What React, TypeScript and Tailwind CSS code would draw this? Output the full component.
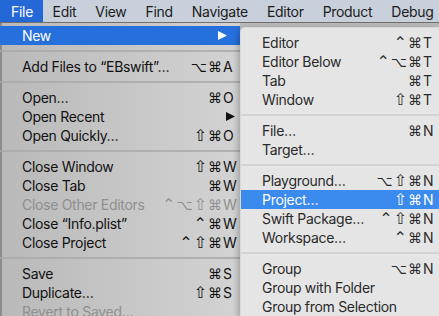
type Item =
  | 'sep'
  | { label: string; mods?: string; k?: string; disabled?: boolean; arrow?: string; active?: boolean }

const MENUBAR = ['Edit', 'View', 'Find', 'Navigate', 'Editor', 'Product', 'Debug']

const FILE_MENU: Item[] = [
  { label: 'New', active: true, arrow: 'mr-[9px]' },
  'sep',
  { label: 'Add Files to “EBswift”…', mods: '⌥⌘', k: 'A' },
  'sep',
  { label: 'Open…', mods: '⌘', k: 'O' },
  { label: 'Open Recent', arrow: 'mr-[1px]' },
  { label: 'Open Quickly…', mods: '⇧⌘', k: 'O' },
  'sep',
  { label: 'Close Window', mods: '⇧⌘', k: 'W' },
  { label: 'Close Tab', mods: '⌘', k: 'W' },
  { label: 'Close Other Editors', mods: '⌃⌥⇧⌘', k: 'W', disabled: true },
  { label: 'Close “Info.plist”', mods: '⌃⌘', k: 'W' },
  { label: 'Close Project', mods: '⌃⇧⌘', k: 'W' },
  'sep',
  { label: 'Save', mods: '⌘', k: 'S' },
  { label: 'Duplicate…', mods: '⇧⌘', k: 'S' },
  { label: 'Revert to Saved…', disabled: true },
]

const NEW_MENU: Item[] = [
  { label: 'Editor', mods: '⌃⌘', k: 'T' },
  { label: 'Editor Below', mods: '⌃⌥⌘', k: 'T' },
  { label: 'Tab', mods: '⌘', k: 'T' },
  { label: 'Window', mods: '⇧⌘', k: 'T' },
  'sep',
  { label: 'File…', mods: '⌘', k: 'N' },
  { label: 'Target…' },
  'sep',
  { label: 'Playground…', mods: '⌥⇧⌘', k: 'N' },
  { label: 'Project…', mods: '⇧⌘', k: 'N', active: true },
  { label: 'Swift Package…', mods: '⌃⇧⌘', k: 'N' },
  { label: 'Workspace…', mods: '⌃⌘', k: 'N' },
  'sep',
  { label: 'Group', mods: '⌥⌘', k: 'N' },
  { label: 'Group with Folder' },
  { label: 'Group from Selection' },
]

// modifier glyphs in DejaVu come out at uneven sizes, so size each one
const MOD_SIZE: Record<string, string> = {
  '⌘': 'text-[14px]',
  '⌥': 'text-[14px]',
  '⇧': 'text-[16px]',
  '⌃': 'text-[16px]',
}

function Arrow({ className }: { className: string }) {
  return (
    <svg width="9" height="9" viewBox="0 0 9 9" className={`ml-auto ${className}`}>
      <polygon points="0,0 9,4.5 0,9" fill="currentColor" />
    </svg>
  )
}

function Mods({ mods }: { mods: string }) {
  return (
    <span className="flex items-center gap-[1px] font-['DejaVu_Sans',sans-serif] tracking-normal leading-none">
      {[...mods].map((m, i) => (
        <span key={i} className={MOD_SIZE[m]}>{m}</span>
      ))}
    </span>
  )
}

function MenuList({ items, sub }: { items: Item[]; sub?: boolean }) {
  return (
    <>
      {items.map((it, i) => {
        if (it === 'sep') {
          return (
            <div key={i} className="h-[12px] flex items-center">
              <div className={sub ? 'h-[2px] w-full bg-[#d3d3d3]' : 'h-[2px] w-full bg-[#a9a9a9]/80'} />
            </div>
          )
        }
        const color = it.active
          ? 'text-white'
          : it.disabled
            ? 'text-[#8f8f8f]'
            : sub
              ? 'text-[#2a2a2a]'
              : 'text-[#111111]'
        const bg = it.active ? (sub ? 'bg-[#3b8aee]' : 'bg-[#2670de]') : ''
        return (
          <div
            key={i}
            className={`h-[19px] flex items-center ${sub ? 'pl-[21px] pr-[3px]' : 'pl-[22px] pr-[4px]'} ${color} ${bg}`}
          >
            <span className="whitespace-nowrap">{it.label}</span>
            {it.arrow && <Arrow className={it.arrow} />}
            {it.k && (
              <span className="ml-auto flex items-center">
                {it.mods && <Mods mods={it.mods} />}
                <span className="w-[14px] pl-[1px]">{it.k}</span>
              </span>
            )}
          </div>
        )
      })}
    </>
  )
}

export default function App() {
  return (
    <div className="relative w-[439px] h-[316px] overflow-hidden bg-[#b9b9b9] font-['Inter',sans-serif] text-[14px] tracking-[-0.3px] select-none">
      {/* menu bar */}
      <div className="h-[22px] flex items-center bg-[#c8d1db] text-[#1b1b1b]">
        <div className="h-full flex items-center pl-[11px] pr-[10px] bg-[#2468d8] text-white">File</div>
        {MENUBAR.map(m => (
          <div key={m} className="h-full flex items-center px-[9.5px]">{m}</div>
        ))}
      </div>
      <div className="h-px bg-[#6e6e6e]" />

      {/* File menu */}
      <div className="w-[240px] h-[293px] pt-[3px] border-l-2 border-[#8c8c8c] bg-gradient-to-r from-[#b9b9b9] via-[#c6c6c6] to-[#d3d3d3]">
        <div className="-ml-[2px]">
          <MenuList items={FILE_MENU} />
        </div>
      </div>

      {/* New submenu */}
      <div className="absolute left-[240px] top-[27px] right-0 bottom-0 pt-[5px] rounded-tl-[5px] border-l border-t border-[#d9d9d9] bg-[#e5e5e5] shadow-[-2px_2px_6px_rgba(0,0,0,0.25)]">
        <MenuList items={NEW_MENU} sub />
      </div>
    </div>
  )
}
